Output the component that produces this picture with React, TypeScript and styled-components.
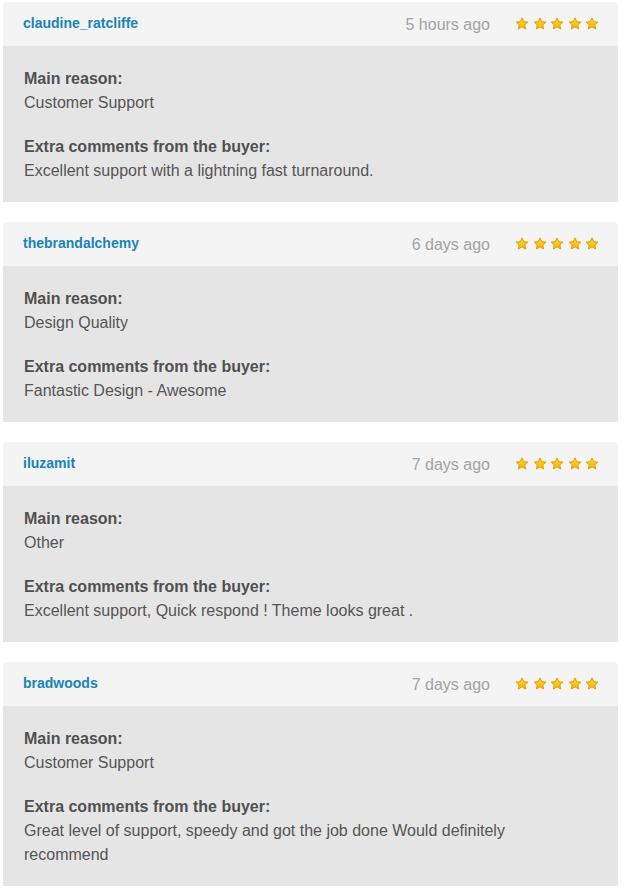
import styled, { createGlobalStyle } from 'styled-components';

const GlobalStyle = createGlobalStyle`
  html, body {
    margin: 0;
    padding: 0;
    background: #ffffff;
  }
  body {
    font-family: 'Liberation Sans', Arial, Helvetica, sans-serif;
  }
`;

interface Review {
  user: string;
  time: string;
  rating: number;
  reason: string;
  comment: string;
}

const REVIEWS: Review[] = [
  {
    user: 'claudine_ratcliffe',
    time: '5 hours ago',
    rating: 5,
    reason: 'Customer Support',
    comment: 'Excellent support with a lightning fast turnaround.',
  },
  {
    user: 'thebrandalchemy',
    time: '6 days ago',
    rating: 5,
    reason: 'Design Quality',
    comment: 'Fantastic Design - Awesome',
  },
  {
    user: 'iluzamit',
    time: '7 days ago',
    rating: 5,
    reason: 'Other',
    comment: 'Excellent support, Quick respond ! Theme looks great .',
  },
  {
    user: 'bradwoods',
    time: '7 days ago',
    rating: 5,
    reason: 'Customer Support',
    comment: 'Great level of support, speedy and got the job done Would definitely recommend',
  },
];

const ReviewList = styled.div`
  display: flex;
  flex-direction: column;
  gap: 20px;
  padding: 2px 4px 0 3px;
`;

const Card = styled.section`
  display: flex;
  flex-direction: column;
`;

const CardHeader = styled.header`
  display: flex;
  align-items: center;
  height: 44px;
  padding: 0 19px 0 20px;
  background: #f4f4f4;
  border-radius: 4px 4px 0 0;
`;

const UserName = styled.a`
  flex: 1;
  color: #1a83b6;
  font-size: 14px;
  font-weight: bold;
  text-decoration: none;
  margin-top: -2px;
`;

const TimeAgo = styled.span`
  color: #a3a3a3;
  font-size: 16px;
  margin-right: 25px;
  margin-top: 2px;
`;

const Stars = styled.div`
  display: flex;
  gap: 3.5px;
`;

const CardBody = styled.div`
  display: flex;
  flex-direction: column;
  gap: 20px;
  padding: 21px 40px 19px 21px;
  background: #e5e5e5;
  color: #555555;
  font-size: 16px;
  line-height: 24px;
`;

const Field = styled.div`
  display: flex;
  flex-direction: column;
`;

const FieldLabel = styled.strong`
  font-weight: bold;
  color: #505050;
`;

const FieldValue = styled.span``;

const Star = () => (
  <svg width="14" height="14" viewBox="0 0 14 14">
    <defs>
      <linearGradient id="starFill" x1="0" y1="0" x2="0" y2="1">
        <stop offset="0" stopColor="#ffd83a" />
        <stop offset="1" stopColor="#f7b500" />
      </linearGradient>
    </defs>
    <path
      d="M7 0.9 L8.75 4.75 L12.9 5.1 L9.75 7.85 L10.7 12.0 L7 9.8 L3.3 12.0 L4.25 7.85 L1.1 5.1 L5.25 4.75 Z"
      fill="url(#starFill)"
      stroke="#e39c00"
      strokeWidth="1"
      strokeLinejoin="round"
    />
  </svg>
);

const ReviewCard = ({ review }: { review: Review }) => (
  <Card>
    <CardHeader>
      <UserName href="#">{review.user}</UserName>
      <TimeAgo>{review.time}</TimeAgo>
      <Stars>
        {Array.from({ length: review.rating }).map((_, i) => (
          <Star key={i} />
        ))}
      </Stars>
    </CardHeader>
    <CardBody>
      <Field>
        <FieldLabel>Main reason:</FieldLabel>
        <FieldValue>{review.reason}</FieldValue>
      </Field>
      <Field>
        <FieldLabel>Extra comments from the buyer:</FieldLabel>
        <FieldValue>{review.comment}</FieldValue>
      </Field>
    </CardBody>
  </Card>
);

const App = () => (
  <>
    <GlobalStyle />
    <ReviewList>
      {REVIEWS.map((r) => (
        <ReviewCard key={r.user} review={r} />
      ))}
    </ReviewList>
  </>
);

export default App;
